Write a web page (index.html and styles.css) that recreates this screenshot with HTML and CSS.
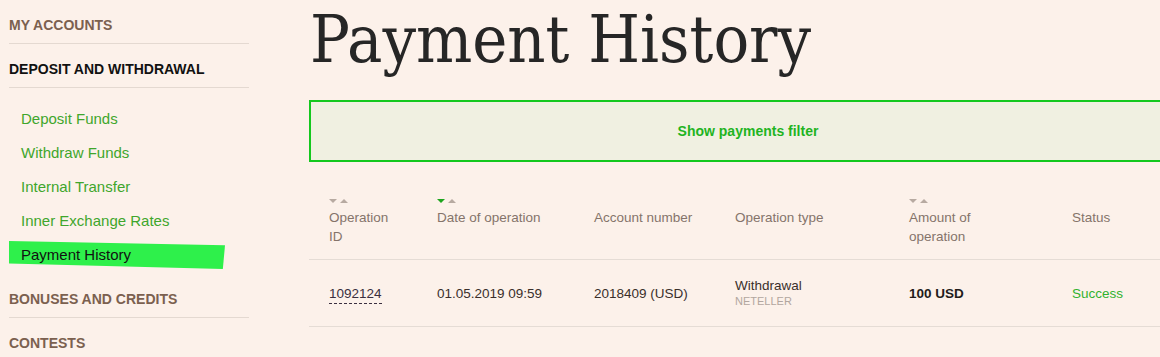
FILE: index.html
```html
<!DOCTYPE html>
<html lang="en">
<head>
    <meta charset="UTF-8">
    <title>Payment History</title>
    <link rel="stylesheet" href="styles.css">
</head>
<body>
    <div class="page">
        <aside class="sidebar">
            <div class="side-head">My accounts</div>
            <div class="side-head current">Deposit and withdrawal</div>
            <ul class="side-list">
                <li><a href="#">Deposit Funds</a></li>
                <li><a href="#">Withdraw Funds</a></li>
                <li><a href="#">Internal Transfer</a></li>
                <li><a href="#">Inner Exchange Rates</a></li>
                <li class="active"><a href="#">Payment History</a></li>
            </ul>
            <div class="side-head">Bonuses and credits</div>
            <div class="side-head">Contests</div>
        </aside>

        <main class="content">
            <h1 class="page-title">Payment History</h1>

            <div class="filter-box">Show payments filter</div>

            <table class="payments">
                <thead>
                    <tr>
                        <th class="col-id"><span class="sort"><i class="down"></i><i class="up"></i></span>Operation<br>ID</th>
                        <th class="col-date"><span class="sort"><i class="down on"></i><i class="up"></i></span>Date of operation</th>
                        <th class="col-acc"><span class="sort empty"></span>Account number</th>
                        <th class="col-type"><span class="sort empty"></span>Operation type</th>
                        <th class="col-amount"><span class="sort"><i class="down"></i><i class="up"></i></span>Amount of<br>operation</th>
                        <th class="col-status"><span class="sort empty"></span>Status</th>
                    </tr>
                </thead>
                <tbody>
                    <tr>
                        <td><span class="op-id">1092124</span></td>
                        <td>01.05.2019 09:59</td>
                        <td>2018409 (USD)</td>
                        <td>
                            <div class="op-type">Withdrawal</div>
                            <div class="op-system">Neteller</div>
                        </td>
                        <td class="amount">100 USD</td>
                        <td class="status">Success</td>
                    </tr>
                </tbody>
            </table>
        </main>
    </div>
</body>
</html>
```

FILE: styles.css
```css
* {
    margin: 0;
    padding: 0;
    box-sizing: border-box;
}

body {
    font-family: "Liberation Sans", Arial, sans-serif;
    background-color: #fcf1ea;
    color: #3a2f2b;
    overflow: hidden;
}

.page {
    display: flex;
    gap: 60px;
    padding-left: 9px;
    width: 1200px;
}

/* sidebar */

.sidebar {
    width: 240px;
    flex: none;
}

.side-head {
    padding: 15px 0 8px;
    line-height: 20px;
    font-size: 14px;
    font-weight: bold;
    text-transform: uppercase;
    color: #7b604f;
    border-bottom: 1px solid #e4d9d1;
}

.side-head.current {
    color: #111;
}

.side-head:last-child {
    border-bottom: none;
}

.side-list {
    list-style: none;
    padding: 14px 0 2px;
}

.side-list li {
    position: relative;
    line-height: 34px;
    font-size: 15px;
}

.side-list a {
    position: relative;
    padding-left: 12px;
    color: #3fa62c;
    text-decoration: none;
}

.side-list li.active::before {
    content: "";
    position: absolute;
    left: 0;
    top: 3px;
    width: 216px;
    height: 28px;
    background-color: #2ef04b;
    clip-path: polygon(0 0, 100% 15%, 99% 100%, 0 80%);
}

.side-list li.active a {
    color: #111;
}

/* content */

.content {
    width: 878px;
    flex: none;
}

.page-title {
    font-family: "DejaVu Serif Condensed", "DejaVu Serif", serif;
    font-stretch: condensed;
    font-weight: normal;
    font-size: 66px;
    line-height: 79px;
    color: #262626;
    margin-left: 1px;
}

.filter-box {
    margin-top: 21px;
    height: 62px;
    border: 2px solid #14c81e;
    background-color: #f0f0e1;
    display: flex;
    align-items: center;
    justify-content: center;
    font-size: 14px;
    font-weight: bold;
    color: #1fb41f;
}

.payments {
    margin-top: 24px;
    width: 100%;
    border-collapse: collapse;
    font-size: 13.5px;
}

.payments th {
    text-align: left;
    vertical-align: top;
    font-weight: normal;
    color: #85746a;
    line-height: 19px;
    padding: 10px 0 13px 20px;
    border-bottom: 1px solid #e5dcd5;
}

.payments td {
    vertical-align: middle;
    padding: 0 0 0 20px;
    height: 67px;
    border-bottom: 1px solid #e5dcd5;
}

.col-id { width: 108px; }
.col-date { width: 157px; }
.col-acc { width: 141px; }
.col-type { width: 174px; }
.col-amount { width: 163px; }

.sort {
    display: flex;
    gap: 3px;
    height: 12px;
    padding-top: 3px;
}

.sort i {
    width: 0;
    height: 0;
    border-left: 4px solid transparent;
    border-right: 4px solid transparent;
}

.sort .down {
    border-top: 4px solid #b7aaa1;
}

.sort .down.on {
    border-top-color: #1ea51e;
}

.sort .up {
    border-bottom: 4px solid #b7aaa1;
}

.op-id {
    border-bottom: 1px dashed #3a2f3f;
    padding-bottom: 2px;
    color: #3a2f3f;
}

.op-type {
    line-height: 17px;
}

.op-system {
    line-height: 15px;
    font-size: 11px;
    text-transform: uppercase;
    color: #b2a69f;
}

.amount {
    font-weight: bold;
    color: #231c1a;
}

.status {
    color: #30b22e;
}
```
